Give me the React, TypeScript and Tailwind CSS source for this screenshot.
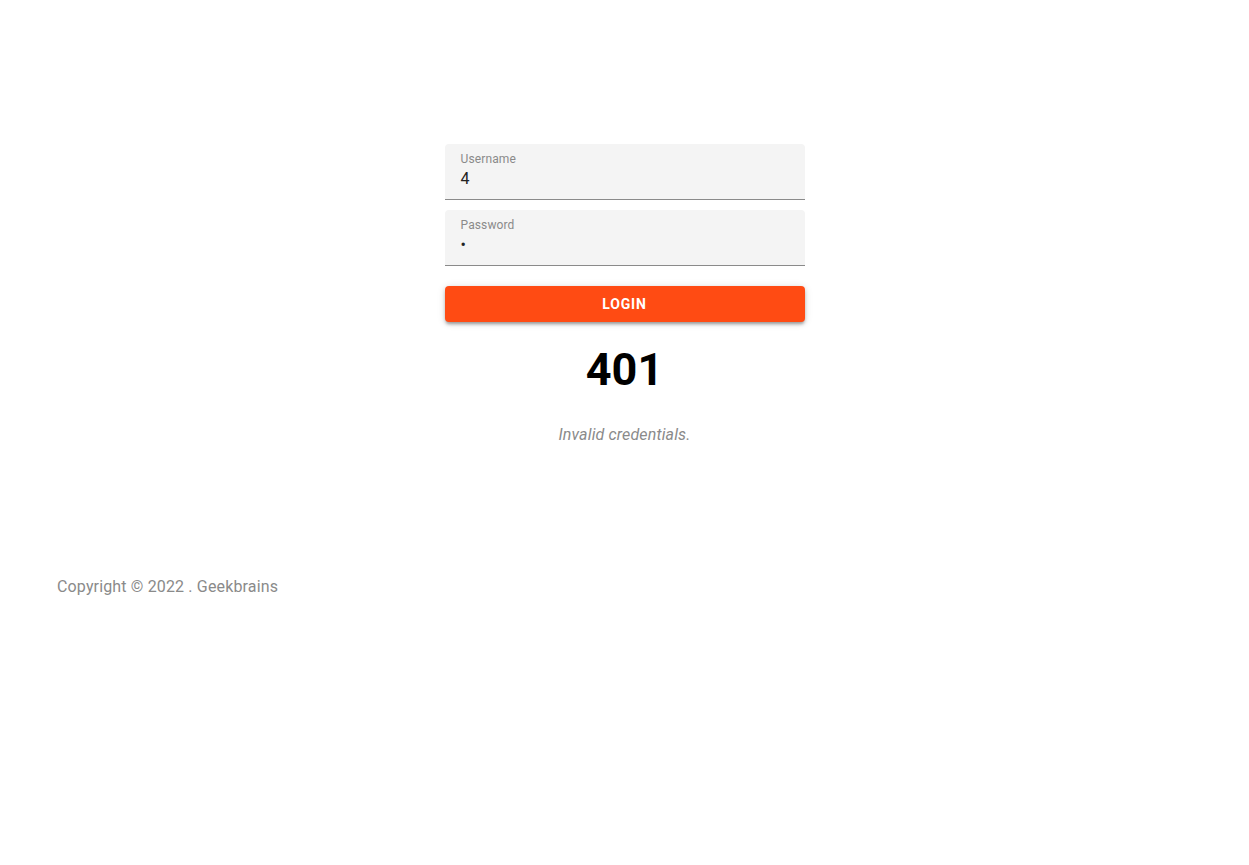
export default function App() {
  return (
    <div className="min-h-screen bg-white font-['Roboto','Liberation_Sans',sans-serif]">
      <div className="mx-auto flex w-[360px] flex-col pt-[144px]">
        <div className="flex h-14 flex-col rounded-t bg-[#f4f4f4] px-4 pt-[7px] border-b border-[#8a8a8a]">
          <span className="text-xs leading-4 tracking-[0.01em] text-[#8a8a8a]">Username</span>
          <span className="mt-[2px] text-base leading-5 text-[#222]">4</span>
        </div>
        <div className="mt-2.5 flex h-14 flex-col rounded-t bg-[#f4f4f4] px-4 pt-[7px] border-b border-[#8a8a8a]">
          <span className="text-xs leading-4 tracking-[0.01em] text-[#8a8a8a]">Password</span>
          <span className="mt-[2px] text-base leading-5 text-[#222]">•</span>
        </div>
        <button className="mt-5 h-9 rounded bg-[#ff4b13] text-sm font-bold tracking-[0.06em] text-white shadow-[0_3px_3px_-1px_rgba(0,0,0,0.25),0_2px_4px_0_rgba(0,0,0,0.14),0_1px_8px_0_rgba(0,0,0,0.12)]">
          LOGIN
        </button>
        <h1 className="mt-[18px] text-center text-[45px] font-bold leading-[60px] text-black">401</h1>
        <p className="mt-[23px] text-center text-base italic tracking-[0.00938em] text-[#8a8a8a]">Invalid credentials.</p>
      </div>
      <footer className="mt-[128px] pl-[57px]">
        <p className="text-base tracking-[0.00938em] text-[#8a8a8a]">Copyright © 2022 . Geekbrains</p>
      </footer>
    </div>
  );
}
